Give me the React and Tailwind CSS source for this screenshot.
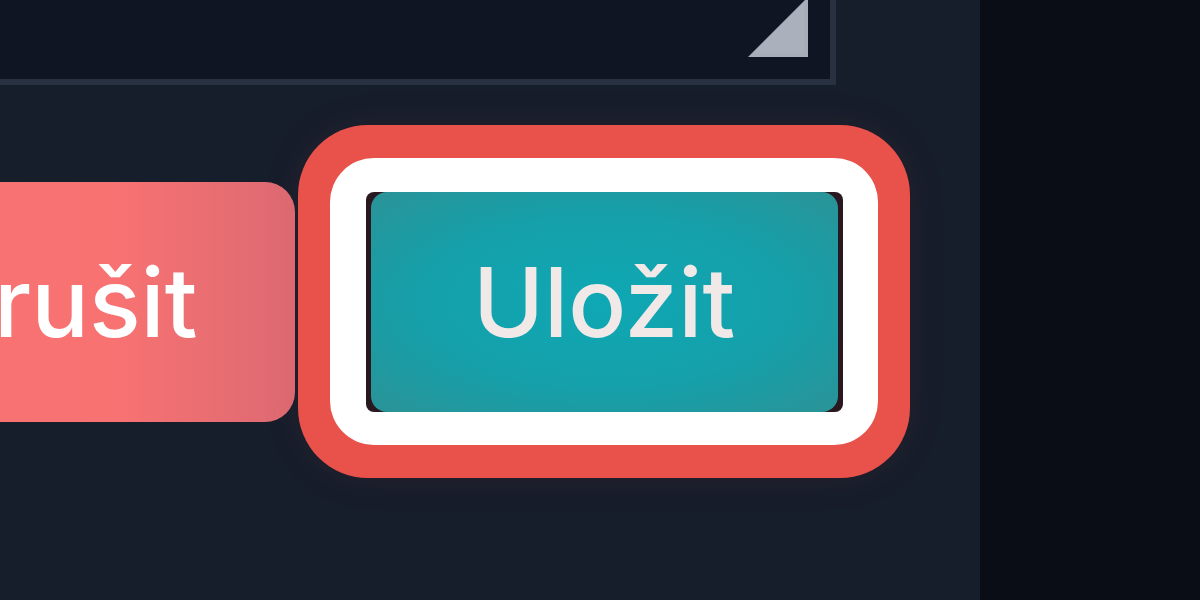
export default function App() {
  return (
    <div className="w-[1200px] h-[600px] flex overflow-hidden bg-[#0a0d15]" style={{ fontFamily: "Inter, 'Noto Sans', sans-serif" }}>
      <div className="w-[980px] h-full shrink-0 bg-[#161d2b] flex flex-col overflow-hidden">
        <div className="relative shrink-0 -mt-[20px] -ml-[40px] h-[105px] w-[876px] bg-[#0f1522] border-[6px] border-[#283141]">
          <svg className="absolute right-[22px] bottom-[22px]" width="60" height="60" viewBox="0 0 60 60">
            <polygon points="60,0 60,60 0,60" fill="#a7adb9" />
            <polygon points="56,6 56,56 6,56" fill="#aab0bc" />
          </svg>
        </div>
        <div className="mt-[40px] flex items-center justify-end pr-[70px] gap-[3px]">
          <div className="shrink-0 w-[470px] h-[240px] pl-[10px] rounded-[30px] bg-[linear-gradient(to_right,#f87373_0%,#f87272_62%,#dc6a72_100%)] flex items-center justify-center">
            <span className="text-[96px] leading-none text-white font-medium">Zrušit</span>
          </div>
          <div className="shrink-0 w-[612px] h-[353px] rounded-[70px] bg-[#e8524a] flex items-center justify-center shadow-[0_0_40px_rgba(232,82,74,0.08)]">
            <div className="w-[548px] h-[287px] rounded-[44px] bg-white flex items-center justify-center">
              <div className="w-[477px] h-[220px] rounded-[8px] bg-[#2a1820] px-[5px] flex">
                <div className="flex-1 rounded-[16px] bg-[radial-gradient(ellipse_at_center,#0ea8b4_0%,#15a0aa_55%,#2a9397_100%)] flex items-center justify-center">
                  <span className="text-[96px] leading-none text-[#f0e9e8] font-medium">Uložit</span>
                </div>
              </div>
            </div>
          </div>
        </div>
      </div>
      <div className="flex-1 bg-[#0a0d15]" />
    </div>
  );
}
